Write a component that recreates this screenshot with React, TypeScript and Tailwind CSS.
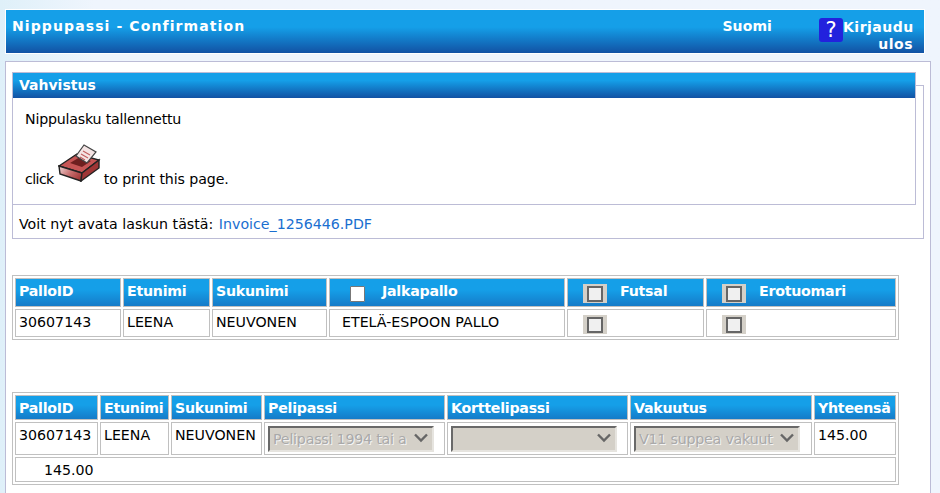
const headCell =
  'border border-[#c0c0c0] bg-gradient-to-b from-[#159fe8] from-40% to-[#157bc8] px-[3px] text-left align-top font-bold tracking-[-0.25px] text-white';
const bodyCell = 'border border-[#c0c0c0] bg-white px-[3px] align-top font-normal text-black';

const Printer = () => (
  <svg width="43" height="38" viewBox="0 0 43 38" className="mb-[5px] ml-[4px] mr-[3px] shrink-0">
    <defs>
      <linearGradient id="front" x1="0" y1="0" x2="1" y2="0.6">
        <stop offset="0" stopColor="#f0d8d8" />
        <stop offset="0.6" stopColor="#c56a6a" />
        <stop offset="1" stopColor="#a53c3c" />
      </linearGradient>
    </defs>
    <path d="M1 22 L19 10 L41 16 L24 29 Z" fill="#c65555" stroke="#222" strokeWidth="1.4" />
    <path d="M1 22 L24 29 L23 37 L2 30 Z" fill="url(#front)" stroke="#222" strokeWidth="1.4" />
    <path d="M24 29 L41 16 L41 24 L23 37 Z" fill="#9e3535" stroke="#222" strokeWidth="1.4" />
    <path d="M12 19 L22 13 L33 17 L24 23 Z" fill="#6e1f1f" />
    <path d="M18 12 L26 1 L38 8 L29 19 Z" fill="#f4e4e4" stroke="#444" strokeWidth="1.2" />
    <path d="M25 7 L32 11 M23 10 L30 14 M22 13 L27 16" stroke="#c26060" strokeWidth="1.2" />
  </svg>
);

const FakeCheck = () => (
  <span className="flex h-[19px] w-[24px] shrink-0 items-center justify-center bg-[#d4d0c8]">
    <span className="h-[16px] w-[16px] border-2 border-[#666] bg-[#f0f0f0]" />
  </span>
);

const Select = ({ value }: { value: string }) => (
  <div className="relative mt-[1px] h-[26px] w-[166px] border-2 border-t-[#696969] border-r-[#e6e4df] border-b-[#e6e4df] border-l-[#696969] bg-[#d4d0c8]">
    <div className="whitespace-nowrap pl-[3px] pt-[3px] tracking-[-0.2px] text-[#a9a9a9] [text-shadow:1px_1px_0_#f4f4f4]">
      {value}
    </div>
    <svg width="16" height="10" viewBox="0 0 16 10" className="absolute right-[3px] top-[5px]">
      <path d="M2 1.5 L8 7.5 L14 1.5" fill="none" stroke="#666" strokeWidth="2.4" />
    </svg>
  </div>
);

export default function App() {
  return (
    <div className="h-[493px] w-[940px] overflow-hidden bg-gradient-to-r from-[#dff0f9] from-0% to-[#eff5fd] to-10% pt-[9px] font-['DejaVu_Sans',Verdana,sans-serif] text-[14.2px] leading-[16px] text-black">
      <header className="ml-[5px] flex h-[45px] w-[920px] justify-between border border-white bg-gradient-to-b from-[#159fe8] from-40% to-[#1252a4] pl-[6px] pt-[8px] text-[14px] font-bold tracking-[1.1px] text-white">
        <div>Nippupassi - Confirmation</div>
        <div className="flex">
          <div className="mr-[47px] tracking-[0.1px]">Suomi</div>
          <div className="mr-[11px] flex">
            <div className="flex h-[24px] w-[24px] items-center justify-center rounded-[3px] bg-[#2222dd] text-[21px] font-normal tracking-normal">
              ?
            </div>
            <div className="w-[70px] pt-[1px] text-right leading-[17px] tracking-[0.5px]">Kirjaudu ulos</div>
          </div>
        </div>
      </header>

      <main className="ml-[5px] mt-[7px] h-[440px] w-[926px] border border-[#bcbcd6] bg-white px-[6px] pt-[10px]">
        <section className="mt-[13px] h-[154px] w-[912px] border border-[#bcbcd6]">
          <div className="-ml-[1px] -mt-[14px] h-[133px] w-[904px] border border-[#bcbcd6] bg-white">
            <h2 className="h-[25px] bg-gradient-to-b from-[#159fe8] from-30% to-[#1252a4] pl-[6px] pt-[4px] text-[14px] font-bold text-white">
              Vahvistus
            </h2>
            <p className="ml-[12px] mt-[13px] tracking-[-0.2px]">Nippulasku tallennettu</p>
            <div className="ml-[12px] mt-[6px] flex h-[54px] items-end tracking-[-0.1px]">
              <span className="tracking-[-0.6px]">click</span>
              <Printer />
              to print this page.
            </div>
          </div>
          <p className="ml-[6px] mt-[11px]">
            Voit nyt avata laskun tästä: <span className="ml-[1px] text-[#1a6fd0]">Invoice_1256446.PDF</span>
          </p>
        </section>

        <table className="mt-[36px] w-[887px] table-fixed border-separate border border-[#c0c0c0] [border-spacing:2px]">
          <thead>
            <tr className="h-[29px]">
              <th className={`${headCell} w-[106px] pt-[4px]`}>PalloID</th>
              <th className={`${headCell} w-[87px] pt-[4px]`}>Etunimi</th>
              <th className={`${headCell} w-[115px] pt-[4px]`}>Sukunimi</th>
              <th className={`${headCell} w-[236px] pt-[4px]`}>
                <div className="flex">
                  <span className="ml-[17px] mr-[17px] mt-[3px] h-[16px] w-[15px] rounded-[1px] border border-[#777] bg-white" />
                  Jalkapallo
                </div>
              </th>
              <th className={`${headCell} w-[137px] pt-[4px]`}>
                <div className="flex">
                  <span className="ml-[12px] mr-[13px] mt-[1px]">
                    <FakeCheck />
                  </span>
                  Futsal
                </div>
              </th>
              <th className={`${headCell} pt-[4px]`}>
                <div className="flex">
                  <span className="ml-[12px] mr-[13px] mt-[1px]">
                    <FakeCheck />
                  </span>
                  Erotuomari
                </div>
              </th>
            </tr>
          </thead>
          <tbody>
            <tr className="h-[28px]">
              <td className={`${bodyCell} pt-[4px]`}>30607143</td>
              <td className={`${bodyCell} pt-[4px]`}>LEENA</td>
              <td className={`${bodyCell} pt-[4px]`}>NEUVONEN</td>
              <td className={`${bodyCell} pl-[12px] pt-[4px]`}>ETELÄ-ESPOON PALLO</td>
              <td className={`${bodyCell} pl-[15px] pt-[5px]`}>
                <FakeCheck />
              </td>
              <td className={`${bodyCell} pl-[15px] pt-[5px]`}>
                <FakeCheck />
              </td>
            </tr>
          </tbody>
        </table>

        <table className="mt-[52px] w-[887px] table-fixed border-separate border border-[#c0c0c0] [border-spacing:2px]">
          <thead>
            <tr className="h-[25px]">
              <th className={`${headCell} w-[83px] pt-[4px]`}>PalloID</th>
              <th className={`${headCell} w-[69px] pt-[4px]`}>Etunimi</th>
              <th className={`${headCell} w-[91px] pt-[4px]`}>Sukunimi</th>
              <th className={`${headCell} w-[181px] pt-[4px]`}>Pelipassi</th>
              <th className={`${headCell} w-[181px] pt-[4px]`}>Korttelipassi</th>
              <th className={`${headCell} w-[182px] pt-[4px]`}>Vakuutus</th>
              <th className={`${headCell} pt-[4px]`}>Yhteensä</th>
            </tr>
          </thead>
          <tbody>
            <tr className="h-[33px]">
              <td className={`${bodyCell} pt-[4px]`}>30607143</td>
              <td className={`${bodyCell} pt-[4px]`}>LEENA</td>
              <td className={`${bodyCell} pt-[4px]`}>NEUVONEN</td>
              <td className={`${bodyCell} pt-[2px]`}>
                <Select value="Pelipassi 1994 tai a" />
              </td>
              <td className={`${bodyCell} pt-[2px]`}>
                <Select value="" />
              </td>
              <td className={`${bodyCell} pt-[2px]`}>
                <Select value="V11 suppea vakuut" />
              </td>
              <td className={`${bodyCell} pt-[4px]`}>145.00</td>
            </tr>
            <tr className="h-[25px]">
              <td colSpan={7} className={`${bodyCell} pl-[28px] pt-[4px]`}>
                145.00
              </td>
            </tr>
          </tbody>
        </table>
      </main>
    </div>
  );
}
